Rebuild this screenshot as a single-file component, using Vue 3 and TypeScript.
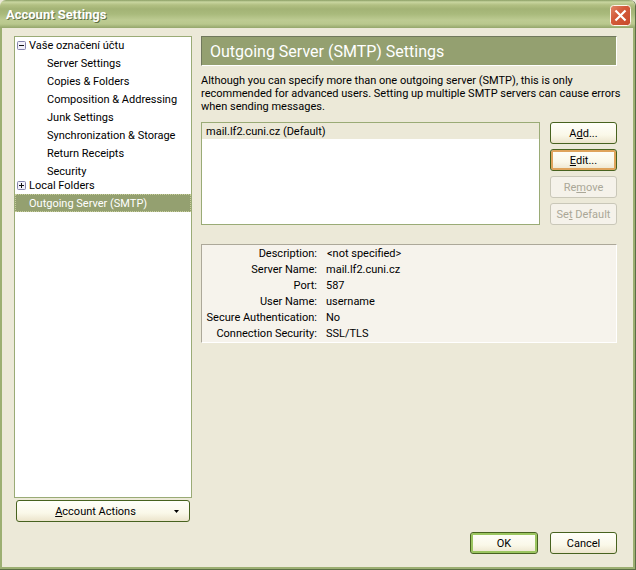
<script setup lang="ts">
import { ref } from 'vue'

interface Detail {
  label: string
  value: string
  indent?: boolean
}

const pages: string[] = [
  'Server Settings',
  'Copies & Folders',
  'Composition & Addressing',
  'Junk Settings',
  'Synchronization & Storage',
  'Return Receipts',
  'Security',
]

const details: Detail[] = [
  { label: 'Description:', value: '<not specified>', indent: true },
  { label: 'Server Name:', value: 'mail.lf2.cuni.cz' },
  { label: 'Port:', value: '587' },
  { label: 'User Name:', value: 'username' },
  { label: 'Secure Authentication:', value: 'No' },
  { label: 'Connection Security:', value: 'SSL/TLS' },
]

const expanded = ref(true)
</script>

<template>
  <div class="window">
    <header class="titlebar">
      <h1 class="title">Account Settings</h1>
      <button class="close" type="button" aria-label="Close">
        <svg viewBox="0 0 21 21" width="21" height="21" aria-hidden="true">
          <defs>
            <linearGradient id="closeFill" x1="0" y1="0" x2="1" y2="1">
              <stop offset="0" stop-color="#e08a6c" />
              <stop offset="0.4" stop-color="#d45a3a" />
              <stop offset="1" stop-color="#c8482a" />
            </linearGradient>
          </defs>
          <rect x="0.5" y="0.5" width="20" height="20" rx="3" fill="url(#closeFill)" stroke="#fdf6ec" />
          <path d="M5.5 5.5 L15.5 15.5 M15.5 5.5 L5.5 15.5" stroke="#fff" stroke-width="2.2" fill="none" />
        </svg>
      </button>
    </header>

    <main class="body">
      <div class="columns">
        <nav class="side">
          <ul class="tree">
            <li>
              <div class="row root">
                <button class="twisty" type="button" aria-label="Toggle account" @click="expanded = !expanded">
                  <svg viewBox="0 0 9 9" width="9" height="9" aria-hidden="true">
                    <rect x="0.5" y="0.5" width="8" height="8" rx="1" fill="#f1effa" stroke="#8583ac" />
                    <path d="M2 4.5 H7" stroke="#111" />
                  </svg>
                </button>
                <span>Vaše označení účtu</span>
              </div>
              <ul v-if="expanded" class="subtree">
                <li v-for="page in pages" :key="page" class="row page">{{ page }}</li>
              </ul>
            </li>
            <li class="row">
              <button class="twisty" type="button" aria-label="Toggle Local Folders">
                <svg viewBox="0 0 9 9" width="9" height="9" aria-hidden="true">
                  <rect x="0.5" y="0.5" width="8" height="8" rx="1" fill="#f1effa" stroke="#8583ac" />
                  <path d="M2 4.5 H7 M4.5 2 V7" stroke="#111" />
                </svg>
              </button>
              <span>Local Folders</span>
            </li>
            <li class="row selected">Outgoing Server (SMTP)</li>
          </ul>
          <button class="btn actions" type="button">
            <span class="actions-label"><u>A</u>ccount Actions</span>
            <svg class="arrow" viewBox="0 0 5 3" width="5" height="3" aria-hidden="true">
              <path d="M0 0 H5 L2.5 3 Z" fill="#000" />
            </svg>
          </button>
        </nav>

        <section class="content">
          <h2 class="banner">Outgoing Server (SMTP) Settings</h2>
          <p class="intro">
            Although you can specify more than one outgoing server (SMTP), this is only<br />
            recommended for advanced users. Setting up multiple SMTP servers can cause errors<br />
            when sending messages.
          </p>
          <div class="servers">
            <ul class="list">
              <li class="server">mail.lf2.cuni.cz (Default)</li>
            </ul>
            <div class="buttons">
              <button class="btn" type="button">A<u>d</u>d...</button>
              <button class="btn hot" type="button"><u>E</u>dit...</button>
              <button class="btn" type="button" disabled>Re<u>m</u>ove</button>
              <button class="btn" type="button" disabled>Se<u>t</u> Default</button>
            </div>
          </div>
          <dl class="details">
            <div v-for="item in details" :key="item.label" class="detail">
              <dt>{{ item.label }}</dt>
              <dd :class="{ indent: item.indent }">{{ item.value }}</dd>
            </div>
          </dl>
        </section>
      </div>

      <footer class="footer">
        <button class="btn default" type="button">OK</button>
        <button class="btn" type="button">Cancel</button>
      </footer>
    </main>
  </div>
</template>

<style>
body {
  background: #ece9d8;
}
</style>

<style scoped>
.window {
  box-sizing: border-box;
  min-height: 100vh;
  display: flex;
  flex-direction: column;
  border: solid #5b6e45;
  border-width: 0 1px 1px 0;
  border-radius: 6px 6px 0 0;
  font-family: Roboto, "Noto Sans", sans-serif;
  font-size: 11px;
  line-height: 13px;
  color: #000;
  background: #ece9d8;
}

.titlebar {
  display: flex;
  align-items: center;
  justify-content: space-between;
  height: 28px;
  box-sizing: border-box;
  padding: 2px 4px 0 6px;
  border-radius: 6px 6px 0 0;
  background: linear-gradient(#8a9d63 0, #c9d6a0 2px, #b2c083 5px, #a3b375 9px, #a9ba7c 14px, #bdcb92 20px, #b9c88d 24px, #94a66b 28px);
}

.title {
  margin: 0;
  font-size: 13px;
  font-weight: 700;
  line-height: 18px;
  color: #fff;
  text-shadow: 1px 1px #5f7045;
}

.close {
  display: block;
  width: 21px;
  height: 21px;
  padding: 0;
  border: 0;
  background: none;
}

.close svg {
  display: block;
}

.body {
  flex: 1;
  display: flex;
  flex-direction: column;
  border: solid #9caf72;
  border-width: 0 2px 2px 2px;
  padding: 8px 16px 13px 12px;
  gap: 10px;
}

.columns {
  flex: 1;
  display: flex;
  gap: 8px;
}

.side {
  width: 178px;
  flex: none;
  display: flex;
  flex-direction: column;
  gap: 2px;
}

ul {
  list-style: none;
  margin: 0;
  padding: 0;
}

.tree {
  flex: 1;
  background: #fff;
  border: 1px solid #9aab76;
}

.row {
  display: flex;
  align-items: center;
  height: 18px;
  box-sizing: border-box;
  white-space: nowrap;
}

.root {
  height: 17px;
}

.twisty {
  width: 9px;
  height: 9px;
  margin: 0 3px 0 2px;
  padding: 0;
  border: 0;
  background: none;
}

.twisty svg {
  display: block;
}

.page {
  padding-left: 32px;
}

.subtree {
  margin-bottom: -4px;
}

.selected {
  padding-left: 13px;
  color: #fff;
  background: #94a070;
  border: 1px dotted #c8cf9c;
}

.btn {
  height: 22px;
  width: 67px;
  box-sizing: border-box;
  padding: 0;
  border: 1px solid #47621f;
  border-radius: 3px;
  background: linear-gradient(#fffffa, #faf8e9 60%, #ece4cc);
  font: inherit;
  color: #000;
  text-align: center;
  white-space: nowrap;
}

.btn:disabled {
  color: #aaa797;
  border-color: #c9c7b8;
  background: #f5f2ea;
}

.hot {
  box-shadow: inset 0 0 0 2px #dfa45c;
}

.default {
  width: 68px;
  box-shadow: inset 0 0 0 2px #9bc560;
}

.actions {
  display: flex;
  align-items: center;
  width: auto;
  margin: 0 2px;
  padding-right: 10px;
}

.actions-label {
  flex: 1;
}

.content {
  flex: 1;
  min-width: 0;
  padding-left: 1px;
}

.banner {
  margin: 0;
  height: 30px;
  box-sizing: border-box;
  padding-left: 8px;
  border: 1px solid;
  border-color: #70785c #fff #fff #70785c;
  background: #94a070;
  color: #fff;
  font-size: 16px;
  font-weight: 400;
  line-height: 30px;
  white-space: nowrap;
}

.intro {
  margin: 8px 0 9px;
  white-space: nowrap;
}

.servers {
  display: flex;
  gap: 10px;
}

.list {
  flex: 1;
  min-width: 0;
  background: #fff;
  border: 1px solid #9aab76;
}

.server {
  height: 16px;
  padding-left: 4px;
  line-height: 18px;
  background: #ece9d8;
}

.buttons {
  display: flex;
  flex-direction: column;
  gap: 5px;
}

.details {
  margin: 19px 0 0;
  padding-top: 1px;
  border: 1px solid;
  border-color: #aca899 #fff #fff #aca899;
  background: #f6f3ec;
}

.detail {
  display: flex;
  gap: 9px;
  line-height: 16px;
}

dt {
  width: 115px;
  flex: none;
  display: flex;
  justify-content: flex-end;
  white-space: nowrap;
}

dd {
  margin: 0;
}

.indent {
  padding-left: 1px;
}

.footer {
  display: flex;
  justify-content: flex-end;
  gap: 12px;
}
</style>
